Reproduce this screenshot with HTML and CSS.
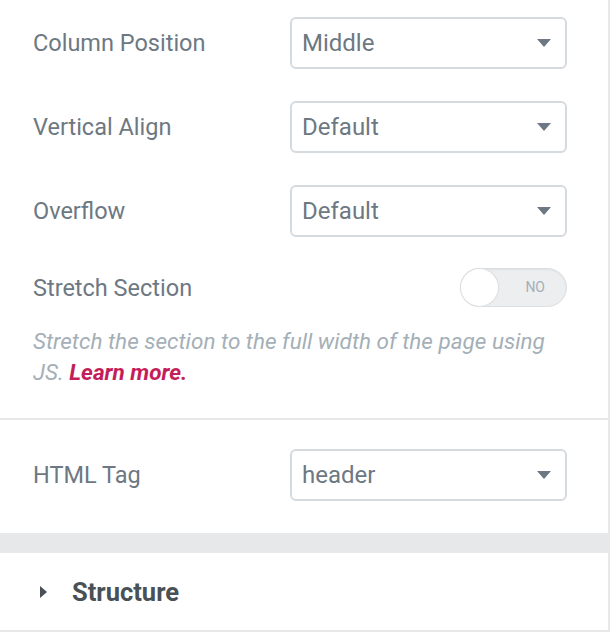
FILE: index.html
```html
<!DOCTYPE html>
<html lang="en">
<head>
  <meta charset="UTF-8">
  <title>Section Layout Settings</title>
  <link rel="stylesheet" href="styles.css">
</head>
<body>
  <div class="panel">
    <div class="section">
      <div class="control">
        <label class="control-label">Column Position</label>
        <div class="select">Middle<span class="caret"></span></div>
      </div>
      <div class="control">
        <label class="control-label">Vertical Align</label>
        <div class="select">Default<span class="caret"></span></div>
      </div>
      <div class="control">
        <label class="control-label">Overflow</label>
        <div class="select">Default<span class="caret"></span></div>
      </div>
      <div class="control control-switch">
        <label class="control-label">Stretch Section</label>
        <div class="switch">
          <span class="switch-knob"></span>
          <span class="switch-text">NO</span>
        </div>
      </div>
      <p class="description">Stretch the section to the full width of the page using JS. <a href="#">Learn more.</a></p>
    </div>

    <div class="section section-tag">
      <div class="control">
        <label class="control-label">HTML Tag</label>
        <div class="select">header<span class="caret"></span></div>
      </div>
    </div>

    <div class="band"></div>

    <div class="section-head">
      <span class="head-arrow"></span>
      <span class="head-title">Structure</span>
    </div>
  </div>
</body>
</html>
```

FILE: styles.css
```css
body {
  margin: 0;
  background: #fff;
  font-family: Roboto, Arial, sans-serif;
}
.panel {
  width: 608px;
  height: 632px;
  border-right: 2px solid #e6e8ea;
}
.section {
  padding: 17px 41px 0 33px;
}
.section-tag {
  border-top: 2px solid #e6e8ea;
  padding-top: 29px;
  padding-bottom: 32px;
}
.control {
  display: flex;
  align-items: center;
  margin-bottom: 32px;
}
.section-tag .control {
  margin-bottom: 0;
}
.control-label {
  flex: 1;
  font-size: 23.5px;
  color: #6d7882;
}
.select {
  position: relative;
  box-sizing: border-box;
  width: 277px;
  height: 52px;
  padding: 0 10px;
  border: 2px solid #d5dadf;
  border-radius: 6px;
  font-size: 24px;
  line-height: 48px;
  color: #6d7882;
}
.caret {
  position: absolute;
  right: 14px;
  top: 20px;
  border-left: 7px solid transparent;
  border-right: 7px solid transparent;
  border-top: 8px solid #6d7882;
}
.control-switch {
  margin-top: -1px;
  margin-bottom: 19px;
}
.switch {
  position: relative;
  box-sizing: border-box;
  width: 107px;
  height: 39px;
  border: 1px solid #dcdfe2;
  border-radius: 20px;
  background: #eceeef;
  box-shadow: inset 0 1px 2px rgba(0,0,0,0.06);
}
.switch-knob {
  position: absolute;
  left: 0;
  top: 0;
  width: 37px;
  height: 37px;
  border-radius: 50%;
  background: #fff;
  box-shadow: 0 0 1px 1px #dcdfe2;
}
.switch-text {
  position: absolute;
  right: 21px;
  top: 0;
  line-height: 37px;
  font-size: 14px;
  color: #a4afb7;
}
.description {
  margin: 0;
  padding-bottom: 30px;
  font-size: 22.5px;
  line-height: 31px;
  font-style: italic;
  color: #a4afb7;
}
.description a {
  color: #c41e5a;
  font-weight: bold;
  text-decoration: none;
}
.band {
  height: 20px;
  background: #e6e8ea;
}
.section-head {
  display: flex;
  align-items: center;
  height: 77px;
  padding-left: 40px;
  border-bottom: 2px solid #e6e8ea;
}
.head-arrow {
  width: 0;
  height: 0;
  border-top: 6px solid transparent;
  border-bottom: 6px solid transparent;
  border-left: 7px solid #495157;
  margin-right: 25px;
}
.head-title {
  font-size: 25.5px;
  font-weight: bold;
  color: #495157;
}
```
